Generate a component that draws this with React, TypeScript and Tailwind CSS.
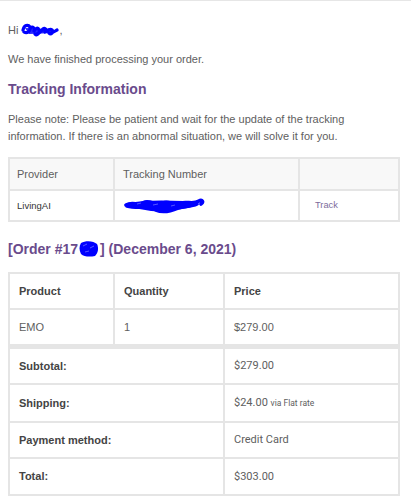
import React from "react";

function NameScribble() {
  return (
    <svg width="38" height="16" viewBox="0 0 38 16" className="inline-block align-[-4px]">
      <path
        d="M2 8 C3 3 7 2 9 5 C10 9 6 12 3 10 M9 6 C12 4 14 6 13 9 C15 6 17 5 18 8 C19 11 16 14 14 12 C17 13 20 9 22 7 C24 5 26 8 24 10 C27 8 29 6 31 8 C33 10 30 13 28 11 C31 12 34 9 36 8"
        fill="none"
        stroke="#0000ff"
        strokeWidth="3.2"
        strokeLinecap="round"
        strokeLinejoin="round"
      />
      <path d="M4 6 L30 7 L33 11 L8 12 Z" fill="#0000ff" opacity="0.85" />
    </svg>
  );
}

function TrackingScribble() {
  return (
    <svg width="82" height="17" viewBox="0 0 82 17" className="block">
      <path
        d="M3 8 C10 4 16 10 22 5 C28 3 34 10 40 6 C46 3 52 10 58 6 C64 4 70 8 76 4 C79 2 81 5 78 7 M4 9 C14 12 24 8 33 13 C40 16 48 14 55 11 C62 9 68 10 74 7"
        fill="none"
        stroke="#0000ff"
        strokeWidth="3.6"
        strokeLinecap="round"
        strokeLinejoin="round"
      />
      <path d="M5 6 C20 3 40 3 60 4 C70 5 76 6 72 9 C58 13 44 15 28 14 C16 12 8 11 5 6 Z" fill="#0000ff" />
      <path d="M14 7 L18 6 M30 8 L35 7 M48 9 L52 8" stroke="#6b6bff" strokeWidth="0.8" />
    </svg>
  );
}

function OrderScribble() {
  return (
    <svg width="22" height="19" viewBox="0 0 22 19" className="inline-block align-[-4px]">
      <path d="M3 4 C8 1 16 2 19 5 C21 9 20 14 17 17 C12 18 6 18 3 15 C1 11 1 7 3 4 Z" fill="#0000ff" />
      <path d="M5 7 L9 5 M12 9 L16 7 M7 13 L11 12" stroke="#5a5aff" strokeWidth="1" />
    </svg>
  );
}

export default function App() {
  const cell = "border border-[#e5e5e5] px-[9px] text-left align-middle";

  return (
    <div className="w-[411px] h-[500px] bg-white border-t border-[#e6e6e6] font-['Liberation_Sans',Arial,sans-serif] text-[#606060] overflow-hidden">
      <div className="w-[392px] ml-2">
        <p className="mt-[21px] text-[11px] leading-[17px]">
          Hi <NameScribble />,
        </p>
        <p className="mt-[11.5px] text-[11px] leading-[17px]">We have finished processing your order.</p>

        <h2 className="mt-[12.5px] text-[14px] leading-[18px] font-bold text-[#6a4b8c]">Tracking Information</h2>

        <p className="mt-[12.5px] text-[11px] leading-[17px]">
          Please note: Please be patient and wait for the update of the tracking information. If there is an
          abnormal situation, we will solve it for you.
        </p>

        {/* tracking table */}
        <table className="mt-[12.5px] w-full border border-[#e5e5e5] border-separate border-spacing-0 table-fixed">
          <colgroup>
            <col className="w-[105px]" />
            <col className="w-[185px]" />
            <col />
          </colgroup>
          <thead>
            <tr className="bg-[#f8f8f8]">
              <th className={`${cell} font-normal text-[11px] leading-[30px] text-[#5e5e5e] !px-[7px]`}>Provider</th>
              <th className={`${cell} font-normal text-[11px] leading-[30px] text-[#5e5e5e] !px-[8px]`}>Tracking Number</th>
              <th className={cell}></th>
            </tr>
          </thead>
          <tbody>
            <tr>
              <td className={`${cell} text-[9.5px] leading-[29px] text-[#333] !px-[7px]`}>LivingAI</td>
              <td className={`${cell} !px-[8px]`}>
                <TrackingScribble />
              </td>
              <td className={`${cell} text-[9.3px] leading-[29px] text-[#7d6c9b] !px-[15px]`}>Track</td>
            </tr>
          </tbody>
        </table>

        <h2 className="mt-[17px] text-[14px] leading-[18px] font-bold text-[#6a4b8c]">
          [Order #17
          <OrderScribble />] (December 6, 2021)
        </h2>

        {/* order table */}
        <table className="mt-[14px] w-full border border-[#e5e5e5] border-separate border-spacing-0 table-fixed text-[11px]">
          <colgroup>
            <col className="w-[105px]" />
            <col className="w-[110px]" />
            <col />
          </colgroup>
          <thead>
            <tr>
              <th className={`${cell} font-bold leading-[34px] text-[#444]`}>Product</th>
              <th className={`${cell} font-bold leading-[34px] text-[#444]`}>Quantity</th>
              <th className={`${cell} font-bold leading-[34px] text-[#444]`}>Price</th>
            </tr>
          </thead>
          <tbody>
            <tr>
              <td className={`${cell} leading-[34px]`}>EMO</td>
              <td className={`${cell} leading-[34px]`}>1</td>
              <td className={`${cell} leading-[34px]`}>$279.00</td>
            </tr>
          </tbody>
          <tfoot>
            <tr>
              <th colSpan={2} className={`${cell} border-t-4 font-bold leading-[34px] text-[#444]`}>
                Subtotal:
              </th>
              <td className={`${cell} border-t-4 leading-[34px] font-[Roboto,sans-serif]`}>$279.00</td>
            </tr>
            <tr>
              <th colSpan={2} className={`${cell} font-bold leading-[36px] text-[#444]`}>
                Shipping:
              </th>
              <td className={`${cell} leading-[36px] font-[Roboto,sans-serif]`}>
                $24.00 <span className="text-[8.5px]">via Flat rate</span>
              </td>
            </tr>
            <tr>
              <th colSpan={2} className={`${cell} font-bold leading-[34px] text-[#444]`}>
                Payment method:
              </th>
              <td className={`${cell} leading-[34px] font-[Roboto,sans-serif]`}>Credit Card</td>
            </tr>
            <tr>
              <th colSpan={2} className={`${cell} font-bold leading-[35px] text-[#444]`}>
                Total:
              </th>
              <td className={`${cell} leading-[35px] font-[Roboto,sans-serif]`}>$303.00</td>
            </tr>
          </tfoot>
        </table>
      </div>
    </div>
  );
}
